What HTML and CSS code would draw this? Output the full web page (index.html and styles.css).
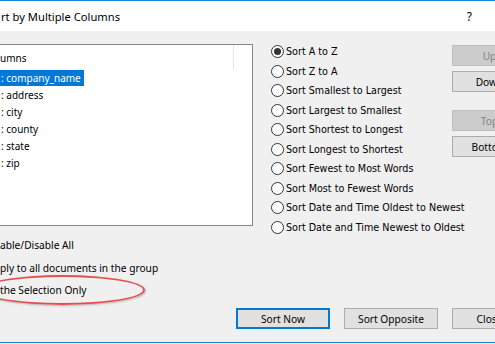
FILE: index.html
```html
<!DOCTYPE html>
<html lang="en">

<head>
    <meta charset="UTF-8">
    <title>Sort by Multiple Columns</title>
    <link rel="stylesheet" href="styles.css">
</head>

<body>
    <div class="window">
        <div class="titlebar">
            <span class="title">rt by Multiple Columns</span>
            <span class="help">?</span>
        </div>

        <div class="dialog">
            <div class="main">
                <div class="left">
                    <div class="listbox">
                        <div class="list-head">
                            <span>umns</span>
                            <span class="head-sep"></span>
                        </div>
                        <ul class="cols">
                            <li><span class="selected">: company_name</span></li>
                            <li><span>: address</span></li>
                            <li><span>: city</span></li>
                            <li><span>: county</span></li>
                            <li><span>: state</span></li>
                            <li><span>: zip</span></li>
                        </ul>
                    </div>
                    <div class="opts">
                        <div class="opt">able/Disable All</div>
                        <div class="opt">ply to all documents in the group</div>
                        <div class="opt">the Selection Only</div>
                    </div>
                </div>

                <div class="radios">
                    <label class="radio checked"><span class="dot"></span>Sort A to Z</label>
                    <label class="radio"><span class="dot"></span>Sort Z to A</label>
                    <label class="radio"><span class="dot"></span>Sort Smallest to Largest</label>
                    <label class="radio"><span class="dot"></span>Sort Largest to Smallest</label>
                    <label class="radio"><span class="dot"></span>Sort Shortest to Longest</label>
                    <label class="radio"><span class="dot"></span>Sort Longest to Shortest</label>
                    <label class="radio"><span class="dot"></span>Sort Fewest to Most Words</label>
                    <label class="radio"><span class="dot"></span>Sort Most to Fewest Words</label>
                    <label class="radio"><span class="dot"></span>Sort Date and Time Oldest to Newest</label>
                    <label class="radio"><span class="dot"></span>Sort Date and Time Newest to Oldest</label>
                </div>

                <div class="side">
                    <button class="btn disabled">Up</button>
                    <button class="btn">Down</button>
                    <button class="btn disabled group">Top</button>
                    <button class="btn">Bottom</button>
                </div>
            </div>

            <div class="actions">
                <button class="btn wide default">Sort Now</button>
                <button class="btn wide">Sort Opposite</button>
                <button class="btn">Close</button>
            </div>

            <!-- red annotation round the last option -->
            <div class="mark"></div>
        </div>
    </div>
</body>

</html>
```

FILE: styles.css
```css
body {
    margin: 0;
    width: 495px;
    height: 344px;
    overflow: hidden;
    background: #f0f0f0;
    font-family: "Noto Sans", sans-serif;
    font-size: 10px;
    color: #000;
}

.window {
    border-top: 1px solid #1883d7;
    border-bottom: 1px solid #1883d7;
    height: 341px;
    overflow: hidden;
}

.titlebar {
    display: flex;
    align-items: center;
    justify-content: space-between;
    height: 30px;
    background: #fff;
}

.title {
    font-size: 11.2px;
    margin-left: 1px;
}

.help {
    font-size: 12px;
    margin-right: 23px;
}

.dialog {
    position: relative;
    height: 311px;
    background: #f0f0f0;
    display: flex;
    flex-direction: column;
}

.main {
    display: flex;
    height: 269px;
}

.left {
    flex-shrink: 0;
    width: 253px;
    padding-top: 13px;
}

.listbox {
    height: 180px;
    background: #fff;
    border: 1px solid #828790;
    border-left: none;
}

.list-head {
    display: flex;
    justify-content: space-between;
    height: 25px;
    line-height: 26px;
}

.head-sep {
    width: 1px;
    background: #e5e5e5;
    margin-right: 18px;
}

.cols {
    list-style: none;
    margin: 0;
    padding: 0;
}

.cols li {
    height: 17px;
    line-height: 16px;
}

.cols li span {
    display: inline-block;
    padding: 0 3px 0 1px;
}

.cols .selected {
    background: #0078d7;
    color: #fff;
}

.opts {
    margin-top: 8px;
    font-size: 10.2px;
}

.opt {
    height: 22.5px;
    line-height: 22px;
    white-space: nowrap;
}

.radios {
    flex-shrink: 0;
    display: flex;
    flex-direction: column;
    padding-top: 11px;
    margin-left: 18px;
    width: 181px;
    font-family: "DejaVu Sans", sans-serif;
    font-size: 9.6px;
}

.radio {
    display: flex;
    align-items: center;
    height: 19.5px;
    white-space: nowrap;
}

.dot {
    flex-shrink: 0;
    box-sizing: border-box;
    width: 13px;
    height: 13px;
    border: 1px solid #333;
    border-radius: 50%;
    background: #fff;
    margin-right: 2px;
    display: flex;
    align-items: center;
    justify-content: center;
}

.radio.checked .dot::after {
    content: "";
    width: 7px;
    height: 7px;
    border-radius: 50%;
    background: #333;
}

.side {
    flex-shrink: 0;
    display: flex;
    flex-direction: column;
    padding-top: 14px;
}

.btn {
    flex-shrink: 0;
    box-sizing: border-box;
    width: 75px;
    height: 21px;
    padding: 0;
    background: #e1e1e1;
    border: 1px solid #adadad;
    font-family: "Noto Sans", sans-serif;
    font-size: 10.2px;
    color: #000;
    white-space: nowrap;
}

.side .btn + .btn {
    margin-top: 5px;
}

.side .btn.group {
    margin-top: 18px;
}

.btn.disabled {
    background: #cccccc;
    border-color: #bfbfbf;
    color: #838383;
}

.actions {
    display: flex;
    gap: 14px;
    margin-top: 8px;
    padding-left: 236px;
}

.btn.wide {
    width: 94px;
}

.btn.default {
    border: 2px solid #0078d7;
}

.mark {
    position: absolute;
    left: -20px;
    top: 244px;
    width: 161px;
    height: 26px;
    border: 2px solid #e0504f;
    border-radius: 50%;
    box-shadow: 1px 1px 2px rgba(0, 0, 0, 0.25);
}
```
